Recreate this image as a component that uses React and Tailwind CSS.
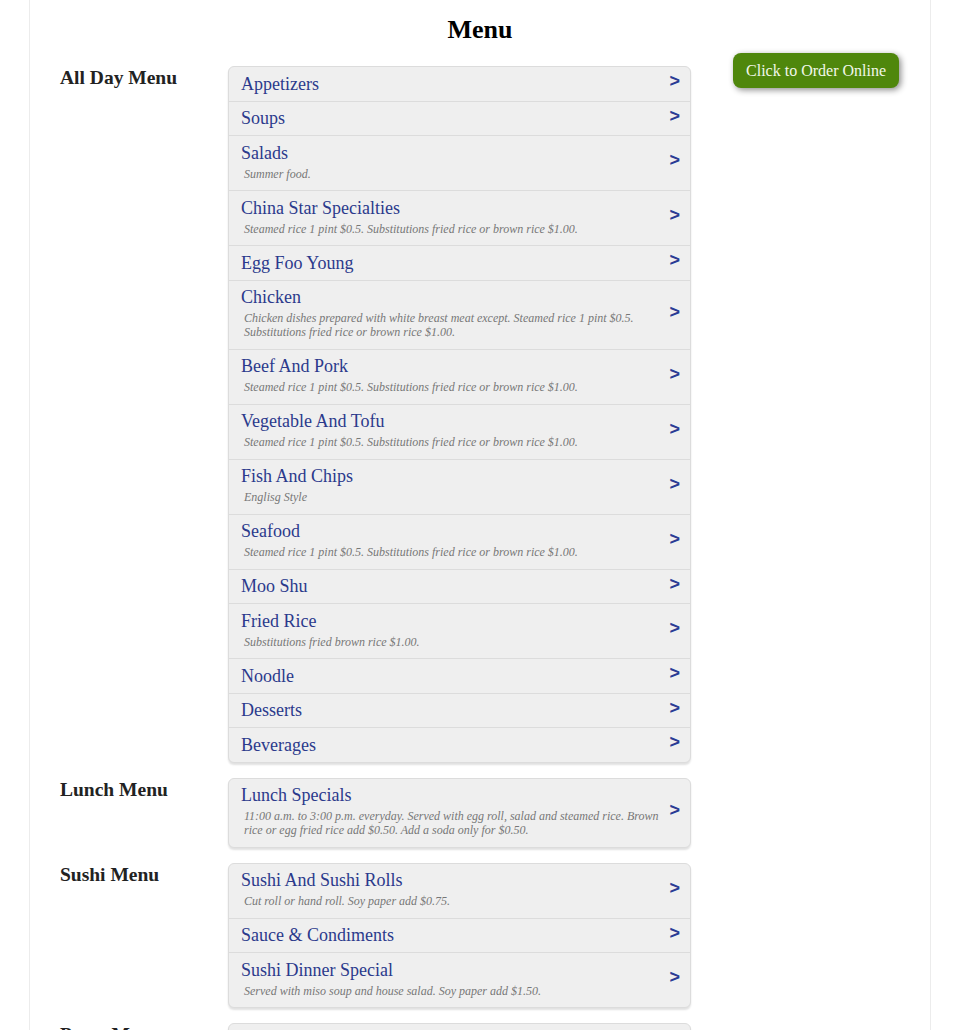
import React from "react";

const sections = [
  {
    label: "All Day Menu",
    items: [
      { t: "Appetizers" },
      { t: "Soups" },
      { t: "Salads", d: "Summer food." },
      { t: "China Star Specialties", d: "Steamed rice 1 pint $0.5. Substitutions fried rice or brown rice $1.00." },
      { t: "Egg Foo Young" },
      { t: "Chicken", d: "Chicken dishes prepared with white breast meat except. Steamed rice 1 pint $0.5. Substitutions fried rice or brown rice $1.00." },
      { t: "Beef And Pork", d: "Steamed rice 1 pint $0.5. Substitutions fried rice or brown rice $1.00." },
      { t: "Vegetable And Tofu", d: "Steamed rice 1 pint $0.5. Substitutions fried rice or brown rice $1.00." },
      { t: "Fish And Chips", d: "Englisg Style" },
      { t: "Seafood", d: "Steamed rice 1 pint $0.5. Substitutions fried rice or brown rice $1.00." },
      { t: "Moo Shu" },
      { t: "Fried Rice", d: "Substitutions fried brown rice $1.00." },
      { t: "Noodle" },
      { t: "Desserts" },
      { t: "Beverages" },
    ],
  },
  {
    label: "Lunch Menu",
    items: [
      { t: "Lunch Specials", d: "11:00 a.m. to 3:00 p.m. everyday. Served with egg roll, salad and steamed rice. Brown rice or egg fried rice add $0.50. Add a soda only for $0.50." },
    ],
  },
  {
    label: "Sushi Menu",
    items: [
      { t: "Sushi And Sushi Rolls", d: "Cut roll or hand roll. Soy paper add $0.75." },
      { t: "Sauce & Condiments" },
      { t: "Sushi Dinner Special", d: "Served with miso soup and house salad. Soy paper add $1.50." },
    ],
  },
  {
    label: "Party Menu",
    items: [
      { t: "Party Trays", d: "Serves 10 to 12 people." },
      { t: "Party Platters" },
    ],
  },
];

function Row({ item, first }) {
  return (
    <div className={"flex items-center pl-[12px] pr-[10px] pt-[5.5px] pb-[6px] " + (first ? "" : "border-t border-[#dcdcdc]")}>
      <div className="flex-1 min-w-0">
        <div className="text-[18px] leading-[22px] text-[#2b3a8c]">{item.t}</div>
        {item.d && (
          <div className="mt-[3px] mb-[3.5px] pl-[3px] text-[12px] leading-[14px] italic text-[#777777]">{item.d}</div>
        )}
      </div>
      <div className="ml-[8px] -mt-[5px] text-[18px] leading-[18px] font-bold text-[#2a3b94] font-['Liberation_Sans',Arial,sans-serif]">&gt;</div>
    </div>
  );
}

export default function App() {
  return (
    <div className="bg-white min-h-[1030px] font-['Liberation_Serif','Times_New_Roman',serif]">
      <div className="mx-auto w-[902px] border-x border-[#ececec] min-h-[1030px] pt-[14px]">
        <h1 className="text-center text-[26px] leading-[32px] font-bold text-black">Menu</h1>
        <div className="flex mt-[20px] pl-[30px]">
          <div className="w-[632px] flex flex-col gap-[15px]">
            {sections.map((s) => (
              <div key={s.label} className="flex">
                <div className="w-[168px] shrink-0 pt-[1px] text-[19.5px] leading-[22px] font-bold text-[#222]">{s.label}</div>
                <div className="w-[463px] shrink-0 bg-[#efefef] border border-[#dcdcdc] rounded-[6px] shadow-[0_2px_2px_rgba(0,0,0,0.12)]">
                  {s.items.map((it, i) => (
                    <Row key={it.t} item={it} first={i === 0} />
                  ))}
                </div>
              </div>
            ))}
          </div>
          <div className="flex-1 flex justify-end pr-[31px] -mt-[13px]">
            <div>
              <button className="h-[35px] px-[13px] rounded-[8px] bg-[#4f870c] text-[#f2f7ea] text-[16px] leading-[20px] shadow-[2px_2px_6px_rgba(0,0,0,0.45)] whitespace-nowrap">
                Click to Order Online
              </button>
            </div>
          </div>
        </div>
      </div>
    </div>
  );
}
